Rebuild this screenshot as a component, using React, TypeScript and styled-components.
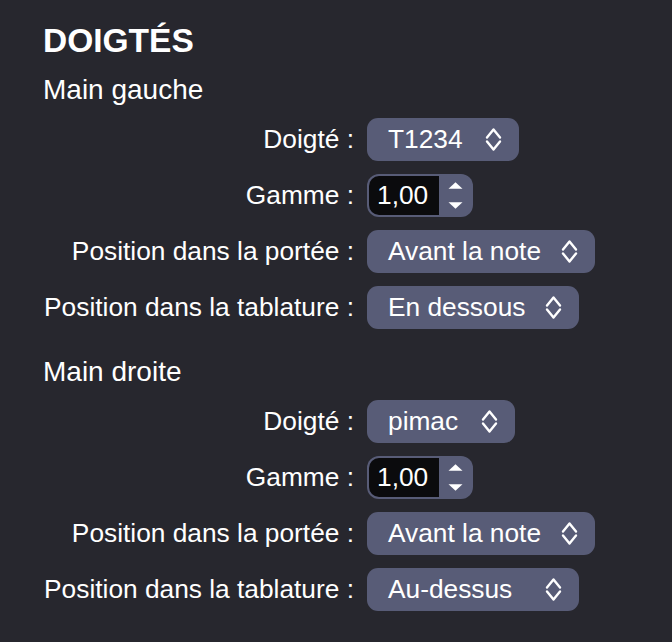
import React from "react";
import styled, { createGlobalStyle } from "styled-components";

const GlobalStyle = createGlobalStyle`
  html, body {
    margin: 0;
    padding: 0;
    background: #27272e;
  }
  body {
    font-family: "Liberation Sans", Arial, Helvetica, sans-serif;
    color: #ffffff;
    -webkit-font-smoothing: antialiased;
  }
`;

const Page = styled.div`
  min-height: 642px;
  box-sizing: border-box;
  padding: 21px 0 0 43px;
  display: flex;
  flex-direction: column;
`;

const Title = styled.h1`
  margin: 0;
  font-size: 33.5px;
  line-height: 40px;
  font-weight: 700;
  color: #ffffff;
`;

const Section = styled.section<{ $first?: boolean }>`
  margin-top: ${(p) => (p.$first ? "12px" : "26px")};
  display: flex;
  flex-direction: column;
  gap: 11px;
`;

const SectionTitle = styled.h2`
  margin: 0;
  font-size: 28px;
  line-height: 34px;
  font-weight: 400;
  color: #ffffff;
`;

const Form = styled.div`
  display: grid;
  grid-template-columns: 311px auto;
  column-gap: 13px;
  row-gap: 13px;
  align-items: center;
  justify-items: start;
`;

const Label = styled.label`
  justify-self: end;
  font-size: 26.3px;
  line-height: 43px;
  color: #ffffff;
  white-space: nowrap;
`;

const SelectButton = styled.div<{ $width: number }>`
  box-sizing: border-box;
  width: ${(p) => p.$width}px;
  height: 43px;
  padding: 0 17px 0 21px;
  border-radius: 11px;
  background: #585c77;
  display: flex;
  align-items: center;
  justify-content: space-between;
  font-size: 26.3px;
  color: #ffffff;
  white-space: nowrap;
`;

const Chevrons = styled.svg`
  width: 17px;
  height: 25px;
  flex: none;
  display: block;
`;

const Stepper = styled.div`
  box-sizing: border-box;
  width: 106px;
  height: 43px;
  padding: 2px 0 2px 2px;
  border-radius: 12px;
  background: #585c77;
  display: flex;
  align-items: stretch;
`;

const StepperField = styled.div`
  width: 70px;
  box-sizing: border-box;
  padding-left: 8px;
  background: #0b0b0d;
  border-radius: 10px 0 0 10px;
  display: flex;
  align-items: center;
  font-size: 26.3px;
  color: #ffffff;
`;

const StepperArrows = styled.div`
  flex: 1;
  display: flex;
  flex-direction: column;
  align-items: center;
  justify-content: center;
  gap: 13px;
  padding-right: 1px;
`;

const Arrow = styled.svg`
  width: 15px;
  height: 7px;
  display: block;
`;

const ChevronIcon = () => (
  <Chevrons viewBox="0 0 17 25" fill="none">
    <path
      d="M2 10.5 L8.5 2.5 L15 10.5"
      stroke="#ffffff"
      strokeWidth="2.4"
      strokeLinecap="round"
      strokeLinejoin="round"
    />
    <path
      d="M2 14.5 L8.5 22.5 L15 14.5"
      stroke="#ffffff"
      strokeWidth="2.4"
      strokeLinecap="round"
      strokeLinejoin="round"
    />
  </Chevrons>
);

const Select = ({ value, width }: { value: string; width: number }) => (
  <SelectButton $width={width}>
    <span>{value}</span>
    <ChevronIcon />
  </SelectButton>
);

const NumberStepper = ({ value }: { value: string }) => (
  <Stepper>
    <StepperField>{value}</StepperField>
    <StepperArrows>
      <Arrow viewBox="0 0 15 7">
        <path d="M7.5 0.2 L14.5 6.8 L0.5 6.8 Z" fill="#ffffff" />
      </Arrow>
      <Arrow viewBox="0 0 15 7">
        <path d="M0.5 0.2 L14.5 0.2 L7.5 6.8 Z" fill="#ffffff" />
      </Arrow>
    </StepperArrows>
  </Stepper>
);

type Hand = {
  title: string;
  doigte: string;
  doigteWidth: number;
  gamme: string;
  portee: string;
  tablature: string;
};

const hands: Hand[] = [
  {
    title: "Main gauche",
    doigte: "T1234",
    doigteWidth: 152,
    gamme: "1,00",
    portee: "Avant la note",
    tablature: "En dessous",
  },
  {
    title: "Main droite",
    doigte: "pimac",
    doigteWidth: 148,
    gamme: "1,00",
    portee: "Avant la note",
    tablature: "Au-dessus",
  },
];

export default function App() {
  return (
    <>
      <GlobalStyle />
      <Page>
        <Title>DOIGTÉS</Title>
        {hands.map((h, i) => (
          <Section key={h.title} $first={i === 0}>
            <SectionTitle>{h.title}</SectionTitle>
            <Form>
              <Label>Doigté&nbsp;:</Label>
              <Select value={h.doigte} width={h.doigteWidth} />
              <Label>Gamme&nbsp;:</Label>
              <NumberStepper value={h.gamme} />
              <Label>Position dans la portée&nbsp;:</Label>
              <Select value={h.portee} width={228} />
              <Label>Position dans la tablature&nbsp;:</Label>
              <Select value={h.tablature} width={212} />
            </Form>
          </Section>
        ))}
      </Page>
    </>
  );
}
